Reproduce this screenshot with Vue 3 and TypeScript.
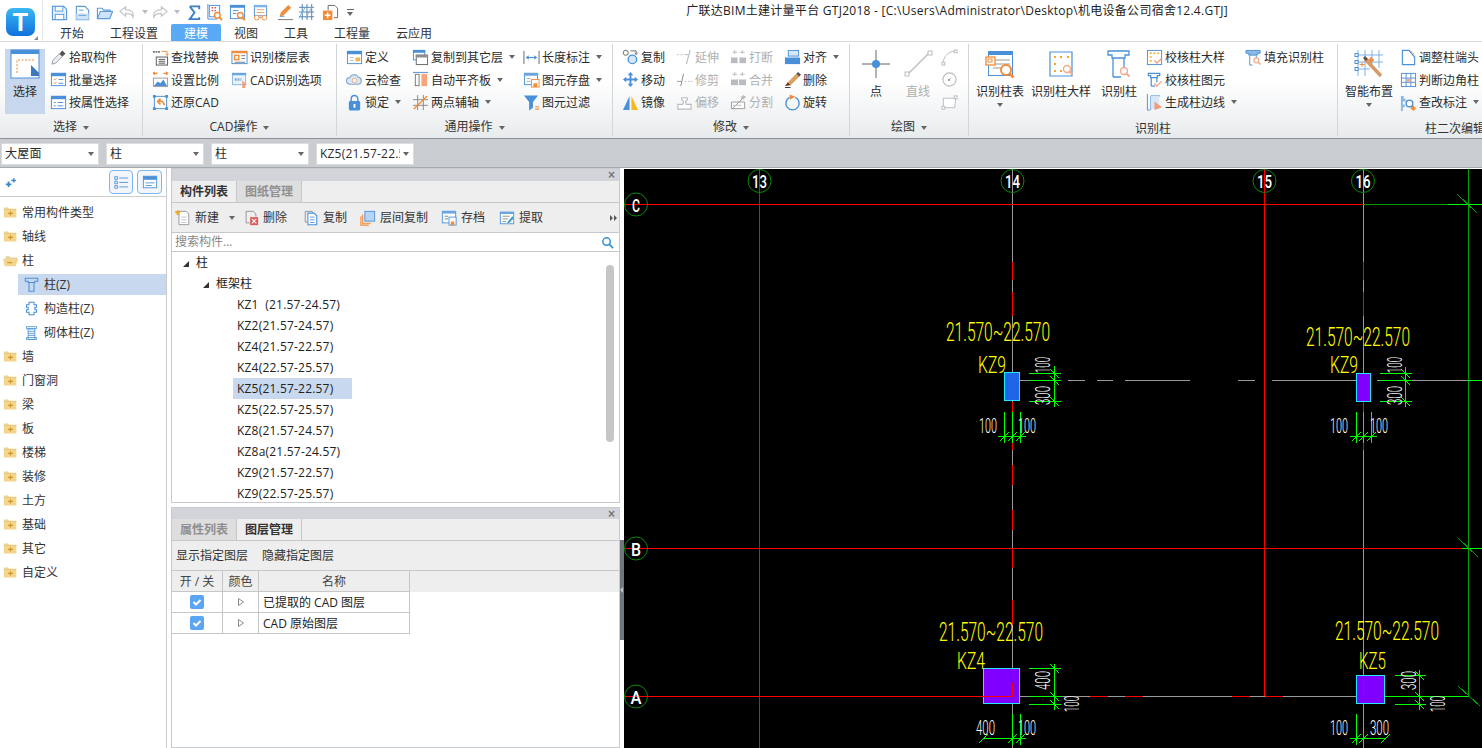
<template>
  <div class="app">
    <!-- title + tabs -->
    <div class="top">
      <div class="logo-box">
        <div class="logo">T</div>
        <span class="grip"></span>
      </div>
      <div class="top-right">
        <div class="quick">
          <span v-for="q in quickIcons" :key="q.i" class="quick-btn" :style="{ width: q.w + 'px' }">
            <svg class="ic" viewBox="0 0 18 18" v-html="icons[q.i]"></svg>
            <i v-if="q.caret" class="caret light"></i>
          </span>
          <span class="quick-more"><i class="caret"></i></span>
          <span class="title">广联达BIM土建计量平台 GTJ2018 - [C:\Users\Administrator\Desktop\机电设备公司宿舍12.4.GTJ]</span>
        </div>
        <div class="tabs">
          <div v-for="t in tabs" :key="t.t" class="tab" :class="{ active: t.t === '建模' }" :style="{ width: t.w + 'px' }">{{ t.t }}</div>
        </div>
      </div>
    </div>

    <!-- ribbon -->
    <div class="ribbon">
      <div v-for="g in groups" :key="g.label" class="group" :style="{ width: g.w + 'px' }">
        <div class="group-body" :style="{ paddingLeft: g.pad + 'px' }">
          <div v-for="(c, ci) in g.cols" :key="ci" class="col" :style="{ width: c.w + 'px', marginLeft: (c.ml || 0) + 'px' }">
            <template v-if="c.big">
              <div class="big" :class="{ sel: c.items[0].sel, off: c.items[0].off }">
                <svg class="big-ic" viewBox="0 0 30 30" v-html="icons[c.items[0].i]"></svg>
                <span class="big-text">{{ c.items[0].t }}</span>
                <i v-if="c.items[0].caret" class="caret big-caret"></i>
              </div>
            </template>
            <template v-else>
              <div v-for="it in c.items" :key="it.i" class="row" :class="{ off: it.off }">
                <svg class="ic" viewBox="0 0 18 18" v-html="icons[it.i]"></svg>
                <span v-if="it.t" class="row-text">{{ it.t }}</span>
                <i v-if="it.caret" class="caret"></i>
              </div>
            </template>
          </div>
        </div>
        <div class="group-label" :class="{ plain: !g.caret }">
          {{ g.label }}<i v-if="g.caret" class="caret label-caret"></i>
        </div>
      </div>
    </div>

    <!-- floor / type selects -->
    <div class="selects">
      <div v-for="s in selects" :key="s.k" class="select">
        <span class="select-text">{{ s.t }}</span><i class="caret"></i>
      </div>
    </div>

    <div class="main">
      <!-- type tree -->
      <div class="side">
        <div class="side-head">
          <svg class="spark" viewBox="0 0 14 12">
            <path d="M4 5h2v2h2v2H6v2H4V9H2V7h2zM10 1h1.500v2H13v1.500h-1.500V6H10V4.500H8V3h2z" fill="#3f86d0" />
          </svg>
          <span class="view-btn">
            <svg viewBox="0 0 18 18" width="16" height="16">
              <path d="M2 3h3v3H2zM2 8h3v3H2zM2 13h3v3H2z" fill="none" stroke="#4a90d9" />
              <path d="M7 4.500h10M7 9.500h10M7 14.500h10" stroke="#4a90d9" />
            </svg>
          </span>
          <span class="view-btn">
            <svg viewBox="0 0 18 18" width="16" height="16">
              <rect x="1.500" y="2.500" width="15" height="13" fill="#fff" stroke="#4a90d9" />
              <rect x="1.500" y="2.500" width="15" height="4" fill="#4a90d9" />
              <path d="M4 10h10M4 13h7" stroke="#4a90d9" />
            </svg>
          </span>
        </div>
        <div class="side-list">
          <div v-for="n in sideList" :key="n.t" class="side-row" :class="{ sub: n.sub, sel: n.sel }">
            <div class="side-inner">
              <svg class="side-ic" viewBox="0 0 18 18" v-html="icons[n.i]"></svg>
              <span>{{ n.t }}</span>
            </div>
          </div>
        </div>
      </div>

      <div class="center">
        <!-- component list -->
        <div class="panel upper">
          <div class="strip"><span class="close">×</span></div>
          <div class="ptabs">
            <div class="ptab on">构件列表</div>
            <div class="ptab">图纸管理</div>
          </div>
          <div class="ptools">
            <div v-for="b in panelTools" :key="b.t" class="ptool" :style="{ width: b.w + 'px' }">
              <svg class="ic16" viewBox="0 0 18 18" v-html="icons[b.i]"></svg>
              <span>{{ b.t }}</span>
              <i v-if="b.caret" class="caret tool-caret"></i>
            </div>
            <svg class="more" viewBox="0 0 8 6" width="8" height="6"><path d="M0 0l3 3-3 3zM4 0l3 3-3 3z" fill="#555" /></svg>
          </div>
          <div class="search">
            <span>搜索构件...</span>
            <svg viewBox="0 0 14 14" width="13" height="13">
              <circle cx="6" cy="6" r="4" fill="none" stroke="#2f8fd0" stroke-width="1.600" />
              <path d="M9 9l4 4" stroke="#2f8fd0" stroke-width="1.800" />
            </svg>
          </div>
          <div class="tree">
            <div class="tree-row lv0"><i class="tri"></i>柱</div>
            <div class="tree-row lv1"><i class="tri"></i>框架柱</div>
            <div v-for="(k, i) in columns" :key="i" class="tree-row lv2" :class="{ sel: i === 4 }">{{ k }}</div>
            <div class="scroll"></div>
          </div>
        </div>

        <!-- layer manager -->
        <div class="panel lower">
          <div class="strip"><span class="close">×</span></div>
          <div class="ptabs">
            <div class="ptab">属性列表</div>
            <div class="ptab on">图层管理</div>
          </div>
          <div class="layer-tools">
            <span>显示指定图层</span>
            <span>隐藏指定图层</span>
          </div>
          <div class="layer-head">
            <div class="c1">开 / 关</div>
            <div class="c2">颜色</div>
            <div class="c3">名称</div>
          </div>
          <div v-for="l in layers" :key="l" class="layer-row">
            <div class="c1">
              <svg viewBox="0 0 14 14" width="14" height="14">
                <rect width="14" height="14" rx="2" fill="#5ba5f5" />
                <path d="M3.500 7l2.500 2.500 4.500-4.500" fill="none" stroke="#fff" stroke-width="2" />
              </svg>
            </div>
            <div class="c2">
              <svg viewBox="0 0 8 10" width="8" height="10">
                <path d="M1.500 1.500l5 3.500-5 3.500z" fill="#fff" stroke="#8a8a8a" />
              </svg>
            </div>
            <div class="c3 name">{{ l }}</div>
          </div>
        </div>
      </div>

      <div class="split">
        <div class="split-bar"><i></i></div>
      </div>

      <!-- CAD drawing -->
      <svg class="canvas" viewBox="624 169 858 579" shape-rendering="crispEdges">
        <line v-for="(s, i) in segments" :key="i" :x1="s[0]" :y1="s[1]" :x2="s[2]" :y2="s[3]" :stroke="s[4]" stroke-width="1" />
        <rect v-for="(r, i) in cols" :key="'c' + i" :x="r.x" :y="r.y" :width="r.w" :height="r.h" :fill="r.f" stroke="#25e8ff" stroke-width="1" />
        <line v-for="(s, i) in overSegments" :key="'o' + i" :x1="s[0]" :y1="s[1]" :x2="s[2]" :y2="s[3]" :stroke="s[4]" stroke-width="1" />
        <g shape-rendering="auto">
          <circle v-for="b in bubbles" :key="b.t" :cx="b.x" :cy="b.y" r="11.500" fill="none" stroke="#0a8a0a" stroke-width="1" />
          <text v-for="b in bubbles" :key="'t' + b.t" class="cad bubble-text" :x="b.x - b.w / 2" :y="b.y + 7" :textLength="b.w" lengthAdjust="spacingAndGlyphs" font-size="19" fill="#fff">{{ b.t }}</text>
          <text v-for="(t, i) in labels" :key="'l' + i" class="cad" :x="t.x" :y="t.y" :font-size="t.s" :fill="t.c" :textLength="t.w" lengthAdjust="spacingAndGlyphs" :transform="t.r ? `rotate(-90 ${t.x} ${t.y})` : undefined">{{ t.t }}</text>
        </g>
      </svg>
    </div>
  </div>
</template>

<script setup lang="ts">
type Item = { t?: string; i: string; caret?: boolean; off?: boolean; sel?: boolean }
type Col = { w: number; ml?: number; big?: boolean; items: Item[] }
type Group = { label: string; w: number; pad: number; caret: boolean; cols: Col[] }
type Seg = [number, number, number, number, string]

const B = '#4a90d9'
const O = '#f28c38'
const G = '#b8bbbf'

const win = `<rect x="1.500" y="2.500" width="15" height="13" fill="#fff" stroke="${B}"/><rect x="1" y="2" width="16" height="3.500" fill="${B}"/>`
const mag = `<circle cx="12" cy="12" r="3" fill="#fff" stroke="${O}" stroke-width="1.500"/><path d="M14 14l3 3" stroke="${O}" stroke-width="2"/>`
const lightMag = `<circle cx="12" cy="12" r="2.600" fill="#fff" stroke="#f3a98a" stroke-width="1.300"/><path d="M14 14l2.500 2.500" stroke="#f3a98a" stroke-width="1.600"/>`
const tee = `<path d="M2.500 2.500h12v2.500h-2.500v2h-7v-2h-2.500zM5.500 7v9M11.500 7v5" fill="none" stroke="${B}" stroke-width="1.300"/><path d="M5.500 16h4" stroke="${B}" stroke-width="1.300"/>`
const folder = (sign: string) => `<path d="M1 3h5l1 1.500h9v10.500h-15z" fill="#f2d58f"/><path d="M1 5h15v1h-15z" fill="#e9c677"/>${sign}`

const icons: Record<string, string> = {
  save: `<path d="M1.500 2.500h12l3 3v11h-15z" fill="#e4f0fb" stroke="#5a9bdc" stroke-width="1.200"/><rect x="4.500" y="2.500" width="8" height="5" fill="#fff" stroke="#5a9bdc"/><rect x="4.500" y="11" width="9" height="5.500" fill="#fff" stroke="#5a9bdc"/>`,
  newdoc: `<path d="M2.500 2.500h9l4 4v10h-13z" fill="#fff" stroke="#5a9bdc" stroke-width="1.200"/><path d="M2.500 10h13v6.500h-13z" fill="#cfe3f7"/><path d="M5 6.500h5M5 12h8" stroke="#5a9bdc"/>`,
  open: `<path d="M1.500 15.500v-11h5l1.500 2h7v2" fill="#fff" stroke="#5a9bdc" stroke-width="1.200"/><path d="M1.500 15.500l3-7.500h13l-3 7.500z" fill="#cfe3f7" stroke="#5a9bdc" stroke-width="1.200"/>`,
  undo: `<path d="M7 3l-6 5 6 5v-3c4 0 7 1 8 4 1-5-2-8-8-8z" fill="#fff" stroke="#c4c7ca" stroke-width="1.300"/>`,
  redo: `<path d="M11 3l6 5-6 5v-3c-4 0-7 1-8 4-1-5 2-8 8-8z" fill="#fff" stroke="#c4c7ca" stroke-width="1.300"/>`,
  sigma: `<path d="M4 2.500h10v3M14 14v2h-10l5-7-5-6.500" fill="none" stroke="#3b7fc4" stroke-width="2"/>`,
  calc: `<rect x="3.500" y="1.500" width="11" height="12" fill="#fff" stroke="${B}"/><path d="M2 0v16h10" fill="none" stroke="${B}"/><path d="M6 4h1.500M9 4h1.500M6 7h1.500M9 7h1.500" stroke="#d0473a" stroke-width="1.500"/>${mag}`,
  docmag: `<rect x="1.500" y="1.500" width="15" height="14" fill="#fff" stroke="${B}"/><rect x="1" y="1" width="16" height="3" fill="${B}"/><path d="M4 7h6M4 10h4" stroke="${B}"/>${mag}`,
  glasses: `<rect x="2.500" y="1.500" width="13" height="11" fill="#fff" stroke="${B}"/><rect x="2" y="1" width="14" height="2.500" fill="#7fb3e6"/><path d="M5 6h8M5 9h8" stroke="#e8a06a"/><circle cx="5" cy="14.500" r="2.500" fill="#fff" stroke="${O}"/><circle cx="13" cy="14.500" r="2.500" fill="#fff" stroke="${O}"/><path d="M7.500 14.500h3" stroke="${O}"/>`,
  penline: `<path d="M3 13l1 -4 8 -8 3 3-8 8z" fill="${O}"/><path d="M1 16.500h16" stroke="#777"/><path d="M3 13h5" stroke="${B}"/>`,
  gridq: `<path d="M1 3.500h16M1 8.500h16M1 13.500h16M4.500 0v17M9.500 0v17M14.500 0v17" stroke="#4f7fb0"/><path d="M1 15L8 3M8 15L15 3" stroke="#7fa9d0"/>`,
  docplus: `<path d="M6.500 1.500h7l3 3v10h-4M6.500 1.500v5" fill="none" stroke="#666"/><rect x="1" y="7" width="10" height="10" fill="${O}"/><path d="M3 12h6M6 9v6" stroke="#fff" stroke-width="1.600"/>`,

  choose: `<rect x="1" y="1" width="28" height="28" fill="#fff" stroke="${B}"/><rect x="1" y="1" width="28" height="4" fill="${B}"/><path d="M7 24V11h17" fill="none" stroke="${O}" stroke-dasharray="2 1.500"/><path d="M21 16l8 8v3h-8z" fill="#3b78bf"/>`,
  dropper: `<path d="M2 16l1-4 7-7 3 3-7 7z" fill="#e9edf1" stroke="#9aa0a6"/><path d="M10 5l3-3.500 3.500 3.500-3.500 3z" fill="#555"/>`,
  batch: `${win}<path d="M4 8.500l1 1 2-2M4 12.500l1 1 2-2" fill="none" stroke="${O}"/><path d="M9 9h5M9 13h5" stroke="${B}"/>`,
  attr: `${win}<path d="M4 9h2M8 9h6M4 12.500h2M8 12.500h6" stroke="${B}"/>`,
  replace: `<path d="M1 3h8" stroke="#777" stroke-width="2" stroke-dasharray="2 .7"/><path d="M10 2.500h6v4M14.500 5l1.500 2 1.500-2" fill="none" stroke="${O}"/><rect x="4.500" y="8.500" width="12" height="8.500" fill="#fff" stroke="#555"/><path d="M7 11h7M7 13h7M7 15h7" stroke="#555"/>`,
  ratio: `<path d="M1 2.500h5M12 2.500h5M1 2.500l2-1.500M1 2.500l2 1.500M17 2.500l-2-1.500M17 2.500l-2 1.500" stroke="${O}" stroke-width="1.200"/><rect x="1.500" y="7.500" width="15" height="9" fill="#fff" stroke="#999"/><path d="M2 16l4-5 3 2 3-4 4 7z" fill="${B}"/>`,
  restore: `<rect x="2.500" y="2.500" width="13" height="13" fill="#fff" stroke="${B}"/><path d="M1 1h3v3h-3zM14 1h3v3h-3zM1 14h3v3h-3zM14 14h3v3h-3z" fill="${B}"/><path d="M13 12c0-4-3-5-6-4M9 5L6 8l3 3" fill="none" stroke="${O}" stroke-width="1.800"/>`,
  floors: `<rect x="1" y="2.500" width="16" height="13" fill="#fff" stroke="${B}"/><rect x="1" y="2" width="16" height="2.500" fill="${O}"/><rect x="3" y="6" width="6" height="6" fill="${O}"/><rect x="4.500" y="7.500" width="3" height="3" fill="#fff"/><path d="M11 7h4M11 10h4M4 14h11" stroke="#777"/>`,
  cadopt: `<rect x="1.500" y="2.500" width="14" height="12" fill="#eaf2fb" stroke="#89b6e3"/><rect x="1" y="2" width="15" height="2.500" fill="#6ba5df"/><path d="M4 9h7" stroke="#7fa9d0" stroke-width="2.500" stroke-dasharray="2 1"/><path d="M12 10l5 5h-2v3h-3z" fill="#f29c74"/>`,

  define: `${win}<path d="M4 9h4M4 12h4" stroke="#bbb"/><rect x="10" y="9" width="5" height="4" fill="#f0b64f"/>`,
  cloud: `<path d="M4 14a3.500 3.500 0 0 1 0-7c1-3.500 7-4.500 9 -.5a3.800 3.800 0 0 1 0 7.500z" fill="#dbe9f7" stroke="#7fa9d0" stroke-width="1.200"/><circle cx="9" cy="10" r="2.500" fill="#fff" stroke="#f0a37a"/>`,
  lock: `<rect x="3" y="7.500" width="12" height="10" rx="1.500" fill="${B}"/><path d="M5.500 8V5a3.500 3.500 0 0 1 7 0v3" fill="none" stroke="${B}" stroke-width="1.500"/><rect x="8" y="10.500" width="2" height="4" fill="#fff"/>`,
  copyfloor: `<rect x="1.500" y="1.500" width="12" height="10" fill="#fff" stroke="${B}"/><rect x="1" y="1" width="13" height="3" fill="${B}"/><rect x="4.500" y="6.500" width="12" height="10" fill="#fff" stroke="#666"/><rect x="4" y="6" width="13" height="3" fill="#8b8f94"/>`,
  flush: `<path d="M1 1.500h16" stroke="${B}"/><rect x="3.500" y="3.500" width="4" height="12" fill="#fff" stroke="#777"/><rect x="10" y="3" width="6" height="13" fill="#f7a57a"/>`,
  twoaxis: `<path d="M1 6h16M1 12h16M6 1v16M12 1v16" stroke="#888"/><path d="M2 16L16 2" stroke="${O}" stroke-width="1.500"/>`,
  length: `<path d="M1 2v14M17 2v14" stroke="#666"/><path d="M3.500 9h11" stroke="${B}" stroke-width="1.200"/><path d="M3 9l3-2.500v5zM15 9l-3-2.500v5z" fill="${B}"/>`,
  store: `<rect x="1.500" y="2.500" width="14" height="12" fill="#fff" stroke="${B}"/><rect x="1" y="2" width="15" height="3" fill="#6ba5df"/><path d="M4 8h4M4 11h4" stroke="#aaa"/><rect x="9" y="9" width="8" height="8" fill="#fff" stroke="${O}"/><rect x="11" y="13" width="4" height="4" fill="${O}"/>`,
  filter: `<path d="M1 1.500h15l-5.500 7v6l-4 3v-9z" fill="${B}"/><path d="M13 13.500h4M13 16h4" stroke="${O}" stroke-width="1.200"/>`,

  copy: `<circle cx="4" cy="4" r="2.700" fill="#fff" stroke="#666"/><circle cx="11" cy="11" r="4.500" fill="#d7e7f7" stroke="${B}" stroke-width="1.400"/><path d="M9 2h6v3M13.500 4l1.500 2 1.500-2" fill="none" stroke="#666"/>`,
  move: `<path d="M9 1l3 3.500h-2V8h3.500V6L17 9l-3.500 3v-2H10v3.500h2L9 17l-3-3.500h2V10H4.500v2L1 9l3.500-3v2H8V4.500H6z" fill="${B}"/>`,
  mirror: `<path d="M8 2v15H1z" fill="${B}"/><path d="M10 2v15h7z" fill="#f5b820"/>`,
  extend: `<path d="M1 6h2M5 6h2M9 6h4" stroke="${G}"/><path d="M15 1L11 16" stroke="${G}" stroke-width="1.200"/>`,
  trim: `<path d="M1 11h5" stroke="#999"/><path d="M9 11h2M13 11h2M16 11h1.500" stroke="${G}"/><path d="M8 3L5 16" stroke="#888"/>`,
  offset: `<path d="M6 4h6v2l-2 2 1 3h5v5H2v-5h5l1-3-2-2z" fill="#fff" stroke="${G}" stroke-width="1.200"/>`,
  brk: `<path d="M5 1v4M2.500 3.500h5M13 1v4M10.500 3.500h5" stroke="${G}"/><rect x="1" y="9" width="7" height="6" fill="${G}"/><rect x="10" y="9" width="7" height="6" fill="${G}"/>`,
  merge: `<path d="M5 1v4M2.500 3.500h5M13 1v4M10.500 3.500h5" stroke="${G}"/><rect x="1" y="9" width="16" height="6" fill="${G}"/><path d="M9 9v6" stroke="#fff"/>`,
  divide: `<path d="M1.500 8.500h14v7h-14z" fill="#fff" stroke="#999"/><path d="M2 16L15 3" stroke="#999"/><path d="M11 4l3-3 3 2-3 3z" fill="${G}"/><path d="M3 12h9" stroke="${G}"/>`,
  align: `<rect x="4.500" y="1.500" width="11" height="6" fill="#d7e7f7" stroke="${B}"/><rect x="1" y="9" width="16" height="7" fill="${B}"/>`,
  erase: `<path d="M4 12l9-9 3 3-9 9z" fill="#d9a25e"/><path d="M13 3l2-2 3 3-2 2z" fill="#555"/><path d="M1 16l3-4 3 3z" fill="#6b3a1e"/><path d="M1 17.500h6" stroke="#333"/>`,
  rotate: `<path d="M6 3.500a7 7 0 1 0 6 0" fill="none" stroke="${B}" stroke-width="1.500"/><path d="M6 .5l6 2.500-6 3z" fill="${O}"/>`,

  point: `<path d="M15 1v28M1 15h28" stroke="#666" stroke-width="1"/><circle cx="15" cy="15" r="4" fill="${B}"/>`,
  linebig: `<path d="M5 25L26 4" stroke="${G}" stroke-width="1.200"/><rect x="2" y="23" width="4" height="4" fill="#fff" stroke="${G}"/><rect x="25" y="2" width="4" height="4" fill="#fff" stroke="${G}"/>`,
  arc: `<path d="M2 15C3 7 8 3 15 2" fill="none" stroke="${G}"/><rect x="1" y="14" width="3" height="3" fill="#fff" stroke="${G}"/><rect x="14" y="1" width="3" height="3" fill="#fff" stroke="${G}"/>`,
  circle: `<circle cx="9" cy="9" r="7" fill="#fff" stroke="${G}" stroke-width="1.200"/><path d="M8 10l3-3" stroke="${G}"/><circle cx="8.500" cy="9.500" r="1.200" fill="#999"/>`,
  rectg: `<path d="M2.500 4.500h13l-1 10h-12z" fill="#fff" stroke="${G}"/><rect x="1" y="13" width="3" height="3" fill="#fff" stroke="${G}"/><rect x="14" y="2" width="3" height="3" fill="#fff" stroke="${G}"/>`,

  coltable: `<rect x="3.500" y="2.500" width="24" height="24" fill="#fff" stroke="${B}"/><rect x="3" y="2" width="25" height="4" fill="${B}"/><path d="M8 11h17M8 15h17M8 19h10" stroke="#999"/><rect x="1" y="8" width="9" height="8" fill="#fff" stroke="${O}" stroke-width="1.300"/><rect x="3" y="10" width="4" height="3" fill="none" stroke="${O}"/><circle cx="21" cy="21" r="5" fill="#fff" stroke="${O}" stroke-width="2"/><path d="M24.500 24.500l4 4" stroke="${O}" stroke-width="2.500"/>`,
  coldetail: `<path d="M4 3h22v24h-22z" fill="#fff" stroke="${B}" stroke-width="1.200"/><path d="M8 8h2M14 8h2M21 8h2M8 15h2M8 22h2M14 22h2" stroke="#f5a623" stroke-width="2"/><circle cx="21" cy="20" r="3.500" fill="#fff" stroke="#f3a98a" stroke-width="1.400"/><path d="M23.500 22.500l3 3" stroke="#f3a98a" stroke-width="1.800"/>`,
  colrec: `<path d="M4 2h21v4h-4v3h-13v-3h-4zM9 9v19M20 9v10M9 28h8" fill="#fff" stroke="${B}" stroke-width="1.300"/><circle cx="20" cy="22" r="3.500" fill="#fff" stroke="#f3a98a" stroke-width="1.400"/><path d="M22.500 24.500l3 3" stroke="#f3a98a" stroke-width="1.800"/>`,
  chkdetail: `<rect x="1.500" y="1.500" width="15" height="15" fill="#fff" stroke="${B}"/><path d="M4 4.500h2M8 4.500h2M12 4.500h2M4 8.500h2M4 12.500h2" stroke="#f5a623" stroke-width="1.600"/><path d="M9 12l2.500 3 5-5" fill="none" stroke="#f39a76" stroke-width="1.300"/>`,
  chkcol: `${tee}<path d="M9 13l2.500 3 5-5" fill="none" stroke="#f39a76" stroke-width="1.300"/>`,
  genedge: `<path d="M1.500 0v17M4 17H1.500M15 2h-10v15" fill="#fff" stroke="${B}"/><rect x="5" y="2" width="9" height="14" fill="#d7e7f7"/><path d="M9 8l8 6-8 3z" fill="#f39a76"/>`,
  fillcol: `<path d="M1 1.500h15v3h-3v2h-9v-2h-3z" fill="#8db8e2" stroke="${B}"/><path d="M5 7v10M12 7v3M5 17h3" stroke="${B}"/>${lightMag}`,
  smart: `<path d="M4 1v26M11 1v26M18 1v18M25 1v18M1 6h28M1 13h28M1 20h15" stroke="#7fb3e6"/><rect x="1" y="4.500" width="3" height="3" fill="#fff" stroke="${B}"/><rect x="1" y="11.500" width="3" height="3" fill="#fff" stroke="${B}"/><rect x="1" y="18.500" width="3" height="3" fill="#fff" stroke="${B}"/><path d="M11 10l16 17" stroke="#d99a6a" stroke-width="3.500"/><path d="M10 8l3 3" stroke="#555" stroke-width="3"/><path d="M17 8l1 2 2 1-2 1-1 2-1-2-2-1 2-1zM8 13v5M5.500 15.500h5" stroke="${O}" fill="${O}"/>`,
  colhead: `<path d="M2.500 1.500v15h13v-8l-6-7z" fill="#fff" stroke="${B}" stroke-width="1.200"/><path d="M11 2l5 4" stroke="${O}" stroke-dasharray="2 1"/>`,
  corner: `<rect x="1.500" y="2.500" width="15" height="14" fill="#fff" stroke="${B}"/><path d="M6.500 2.500v14M11.500 2.500v14M1.500 7.500h15M1.500 12h15" stroke="${B}"/><path d="M7 8h4v4h-4z" fill="#f3a98a"/>`,
  markfix: `<path d="M1 2h3v3h2v3h-3v3h2v3h-2v4h-2z" fill="#8db8e2"/><circle cx="10" cy="10" r="3.500" fill="#fff" stroke="${B}" stroke-width="1.500"/><path d="M12.500 12.500l2 2" stroke="${B}" stroke-width="1.800"/><path d="M14 12l3 3-3 3-3-3z" fill="${O}"/>`,

  fplus: folder(`<path d="M6 10h6M9 7.500v5" stroke="#d9962e" stroke-width="1.500"/>`),
  fminus: `<path d="M3 4h5l1 1.500h8v2h-14z" fill="#e8d2a0"/><path d="M0 7h15l3-0v1l-3 8h-13z" fill="#f2d58f"/><path d="M5 11.500h6" stroke="#d9962e" stroke-width="1.500"/>`,
  coltee: `<path d="M1.500 1.500h15v3.500h-3.500v1.500h-8v-1.500h-3.500zM6 7v10h6v-10" fill="none" stroke="${B}" stroke-width="1.300"/>`,
  colstruct: `<path d="M6 1.500h6v3h3v3h-2v3h2v3h-3v3h-6v-3h-3v-3h2v-3h-2v-3h3z" fill="#fff" stroke="${B}" stroke-width="1.300"/><path d="M11 3h3" stroke="#bcd6f0"/>`,
  colbrick: `<path d="M3 2h12v2.500h-12zM5 4.500h8v13h-8zM3 15h12v2.500h-12z" fill="#fff" stroke="${B}"/><path d="M5 7.500h8M5 10h8M5 12.500h8" stroke="${B}"/>`,

  pnew: `<path d="M4.500 1.500h8l3 3v12h-11z" fill="#fff" stroke="#8a8f95"/><path d="M7 8h6M7 11h6M7 14h6" stroke="#b9bcc0"/><path d="M0 2.500h6M3 0v6" stroke="#f5a623" stroke-width="1.600"/><path d="M1 1l4 4M5 1l-4 4" stroke="#f5a623"/>`,
  pdel: `<path d="M3.500 1.500h8l3 3v3M3.500 1.500v13h4" fill="none" stroke="#8a8f95"/><rect x="8" y="8" width="9" height="9" fill="#e05a58"/><path d="M10 10l5 5M15 10l-5 5" stroke="#fff" stroke-width="1.300"/>`,
  pcopy: `<path d="M2.500 1.500h8v2M2.500 1.500v12h2" fill="none" stroke="#8a8f95"/><path d="M5.500 3.500h7l3 3v10h-10z" fill="#fff" stroke="${B}" stroke-width="1.200"/><path d="M8 8h5M8 11h5M8 14h5" stroke="${B}"/>`,
  pfloor: `<path d="M1 7v10h9M3 5v10h9" fill="none" stroke="${O}" stroke-width="1.200"/><rect x="5.500" y="1.500" width="11" height="11" fill="#b6d4f5" stroke="${B}"/>`,
  parch: `<rect x="1.500" y="1.500" width="15" height="13" fill="#fff" stroke="${B}"/><rect x="1" y="1" width="16" height="3" fill="#6ba5df"/><path d="M4 7h4M4 10h4" stroke="#777"/><rect x="9" y="8" width="8" height="9" fill="#fff" stroke="${B}"/><rect x="11" y="13" width="4" height="4" fill="${O}"/>`,
  pext: `<rect x="1.500" y="2.500" width="15" height="13" fill="#fff" stroke="${B}"/><rect x="1" y="2" width="16" height="2.500" fill="#6ba5df"/><path d="M4 7h8M4 10h6M4 13h4" stroke="#888"/><path d="M9 14l6-7 2 2-6 6z" fill="#3fa0c8"/>`,
}

const quickIcons = [
  { i: 'save', w: 23 }, { i: 'newdoc', w: 22 }, { i: 'open', w: 23 },
  { i: 'undo', w: 32, caret: true }, { i: 'redo', w: 35, caret: true },
  { i: 'sigma', w: 20 }, { i: 'calc', w: 23 }, { i: 'docmag', w: 23 }, { i: 'glasses', w: 25 },
  { i: 'penline', w: 21 }, { i: 'gridq', w: 24 }, { i: 'docplus', w: 25 },
]

const tabs = [
  { t: '开始', w: 50 }, { t: '工程设置', w: 74 }, { t: '建模', w: 50 }, { t: '视图', w: 50 },
  { t: '工具', w: 50 }, { t: '工程量', w: 62 }, { t: '云应用', w: 62 },
]

const groups: Group[] = [
  {
    label: '选择', w: 143, pad: 5, caret: true,
    cols: [
      { w: 40, big: true, items: [{ t: '选择', i: 'choose', sel: true }] },
      { w: 92, ml: 5, items: [{ t: '拾取构件', i: 'dropper' }, { t: '批量选择', i: 'batch' }, { t: '按属性选择', i: 'attr' }] },
    ],
  },
  {
    label: 'CAD操作', w: 194, pad: 9, caret: true,
    cols: [
      { w: 79, items: [{ t: '查找替换', i: 'replace' }, { t: '设置比例', i: 'ratio' }, { t: '还原CAD', i: 'restore' }] },
      { w: 100, items: [{ t: '识别楼层表', i: 'floors' }, { t: 'CAD识别选项', i: 'cadopt' }] },
    ],
  },
  {
    label: '通用操作', w: 276, pad: 9, caret: true,
    cols: [
      { w: 66, items: [{ t: '定义', i: 'define' }, { t: '云检查', i: 'cloud' }, { t: '锁定', i: 'lock', caret: true }] },
      { w: 111, items: [{ t: '复制到其它层', i: 'copyfloor', caret: true }, { t: '自动平齐板', i: 'flush', caret: true }, { t: '两点辅轴', i: 'twoaxis', caret: true }] },
      { w: 88, items: [{ t: '长度标注', i: 'length', caret: true }, { t: '图元存盘', i: 'store', caret: true }, { t: '图元过滤', i: 'filter' }] },
    ],
  },
  {
    label: '修改', w: 237, pad: 9, caret: true,
    cols: [
      { w: 54, items: [{ t: '复制', i: 'copy' }, { t: '移动', i: 'move' }, { t: '镜像', i: 'mirror' }] },
      { w: 54, items: [{ t: '延伸', i: 'extend', off: true }, { t: '修剪', i: 'trim', off: true }, { t: '偏移', i: 'offset', off: true }] },
      { w: 54, items: [{ t: '打断', i: 'brk', off: true }, { t: '合并', i: 'merge', off: true }, { t: '分割', i: 'divide', off: true }] },
      { w: 60, items: [{ t: '对齐', i: 'align', caret: true }, { t: '删除', i: 'erase' }, { t: '旋转', i: 'rotate' }] },
    ],
  },
  {
    label: '绘图', w: 119, pad: 5, caret: true,
    cols: [
      { w: 42, big: true, items: [{ t: '点', i: 'point' }] },
      { w: 42, big: true, items: [{ t: '直线', i: 'linebig', off: true }] },
      { w: 18, ml: 2, items: [{ i: 'arc', off: true }, { i: 'circle', off: true }, { i: 'rectg', off: true }] },
    ],
  },
  {
    label: '识别柱', w: 369, pad: 5, caret: false,
    cols: [
      { w: 52, big: true, items: [{ t: '识别柱表', i: 'coltable', caret: true }] },
      { w: 70, big: true, items: [{ t: '识别柱大样', i: 'coldetail' }] },
      { w: 46, big: true, items: [{ t: '识别柱', i: 'colrec' }] },
      { w: 99, ml: 4, items: [{ t: '校核柱大样', i: 'chkdetail' }, { t: '校核柱图元', i: 'chkcol' }, { t: '生成柱边线', i: 'genedge', caret: true }] },
      { w: 88, items: [{ t: '填充识别柱', i: 'fillcol' }] },
    ],
  },
  {
    label: '柱二次编辑', w: 234, pad: 6, caret: false,
    cols: [
      { w: 50, big: true, items: [{ t: '智能布置', i: 'smart', caret: true }] },
      { w: 100, ml: 6, items: [{ t: '调整柱端头', i: 'colhead' }, { t: '判断边角柱', i: 'corner' }, { t: '查改标注', i: 'markfix', caret: true }] },
    ],
  },
]

const selects = [
  { k: 'floor', t: '大屋面' }, { k: 'major', t: '柱' }, { k: 'type', t: '柱' }, { k: 'name', t: 'KZ5(21.57-22.57)' },
]

const sideList = [
  { t: '常用构件类型', i: 'fplus' }, { t: '轴线', i: 'fplus' }, { t: '柱', i: 'fminus' },
  { t: '柱(Z)', i: 'coltee', sub: true, sel: true }, { t: '构造柱(Z)', i: 'colstruct', sub: true }, { t: '砌体柱(Z)', i: 'colbrick', sub: true },
  { t: '墙', i: 'fplus' }, { t: '门窗洞', i: 'fplus' }, { t: '梁', i: 'fplus' }, { t: '板', i: 'fplus' },
  { t: '楼梯', i: 'fplus' }, { t: '装修', i: 'fplus' }, { t: '土方', i: 'fplus' }, { t: '基础', i: 'fplus' },
  { t: '其它', i: 'fplus' }, { t: '自定义', i: 'fplus' },
]

const panelTools = [
  { t: '新建', i: 'pnew', w: 68, caret: true }, { t: '删除', i: 'pdel', w: 60 }, { t: '复制', i: 'pcopy', w: 57 },
  { t: '层间复制', i: 'pfloor', w: 81 }, { t: '存档', i: 'parch', w: 58 }, { t: '提取', i: 'pext', w: 58 },
]

const columns = [
  'KZ1  (21.57-24.57)', 'KZ2(21.57-24.57)', 'KZ4(21.57-22.57)', 'KZ4(22.57-25.57)', 'KZ5(21.57-22.57)',
  'KZ5(22.57-25.57)', 'KZ8(21.57-24.57)', 'KZ8a(21.57-24.57)', 'KZ9(21.57-22.57)', 'KZ9(22.57-25.57)',
]

const layers = ['已提取的 CAD 图层', 'CAD 原始图层']

// drawing data, page coordinates
const RED = '#ff0000'
const GRAY = '#9a9a9a'
const GREEN = '#00ff00'
const DARK = '#00a000'

const segments: Seg[] = [
  [759.5, 169, 759.5, 748, RED],
  [1012.5, 169, 1012.5, 748, GRAY],
  [1264.5, 169, 1264.5, 697, RED],
  [1363.5, 169, 1363.5, 748, GRAY],
  [1468.5, 169, 1468.5, 697, DARK],
  [625, 204.5, 1363, 204.5, RED],
  [1363, 204.5, 1448, 204.5, DARK],
  [1448, 204.5, 1482, 204.5, GREEN],
  [625, 548.5, 1462, 548.5, RED],
  [1462, 548.5, 1482, 548.5, GREEN],
  [625, 696.5, 1012, 696.5, RED],
  [1012, 696.5, 1363, 696.5, GRAY],
  [1363, 696.5, 1468, 696.5, GREEN],
  [1090, 696.5, 1108, 696.5, RED],
  [1125, 696.5, 1143, 696.5, RED],
  [1232, 696.5, 1250, 696.5, RED],
  [1265, 696.5, 1283, 696.5, RED],
  [1020, 380.5, 1057, 380.5, GRAY],
  [1068, 380.5, 1085, 380.5, GRAY],
  [1097, 380.5, 1113, 380.5, GRAY],
  [1125, 380.5, 1190, 380.5, GRAY],
  [1238, 380.5, 1255, 380.5, GRAY],
  [1272, 380.5, 1357, 380.5, GRAY],
  [1377, 380.5, 1468, 380.5, GRAY],
  [1468, 380.5, 1482, 380.5, GREEN],
]
for (const x of [1012.5, 1363.5]) {
  for (const [a, b] of [[262, 280], [292, 316], [402, 450]]) segments.push([x, a, x, b, RED])
}
for (const [a, b] of [[465, 485], [510, 530], [548, 568], [600, 625]]) segments.push([1012.5, a, 1012.5, b, RED])

const cols = [
  { x: 1004.5, y: 372.5, w: 15, h: 28, f: '#1e66e8' },
  { x: 1356.5, y: 373.5, w: 14, h: 28, f: '#7f00ff' },
  { x: 983.5, y: 668.5, w: 36, h: 35, f: '#7f00ff' },
  { x: 1356.5, y: 675.5, w: 28, h: 28, f: '#7f00ff' },
]

const overSegments: Seg[] = [
  [1012.5, 683, 1012.5, 697, RED],
  [983, 696.5, 1012, 696.5, RED],
  [1363.5, 680, 1363.5, 697, RED],
]

function tick(x: number, y: number, dir: 1 | -1) {
  overSegments.push([x - 4.5, y - 4.5 * dir, x + 4.5, y + 4.5 * dir, GREEN])
}
// vertical dimension chain with its extension lines
function vDim(x: number, top: number, bottom: number, ys: number[], from: number) {
  overSegments.push([x, top, x, bottom, GREEN])
  for (const y of ys) {
    overSegments.push([from, y, x + 6, y, GREEN])
    tick(x, y, 1)
  }
}
// horizontal dimension chain with its extension lines
function hDim(y: number, left: number, right: number, xs: number[], from: number) {
  overSegments.push([left, y, right, y, GREEN])
  for (const x of xs) {
    overSegments.push([x, from, x, y + 6, GREEN])
    tick(x, y, -1)
  }
}
vDim(1054.5, 366, 407, [373.5, 380.5, 401.5], 1029)
hDim(436.5, 998, 1026, [1004.5, 1012.5, 1020.5], 412)
vDim(1405.5, 367, 407, [373.5, 380.5, 401.5], 1380)
hDim(436.5, 1350, 1377, [1356.5, 1363.5, 1371.5], 412)
vDim(1054.5, 664, 710, [668.5, 696.5, 704.5], 1029)
hDim(738.5, 983, 1026, [1012.5, 1020.5], 714)
vDim(1419.5, 670, 710, [675.5, 696.5, 704.5], 1395)
hDim(738.5, 1350, 1385, [1356.5, 1363.5], 714)
tick(983.5, 738.5, -1)
tick(1385.5, 738.5, -1)
overSegments.push([1457, 194, 1477, 213, DARK], [1458, 538, 1478, 557, DARK], [1458, 686, 1480, 706, DARK])

const bubbles = [
  { t: '13', x: 759.5, y: 181, w: 15 }, { t: '14', x: 1012.5, y: 181, w: 15 },
  { t: '15', x: 1264.5, y: 181, w: 15 }, { t: '16', x: 1363, y: 181, w: 15 },
  { t: 'C', x: 636, y: 204.5, w: 8 }, { t: 'B', x: 636, y: 548.5, w: 10 }, { t: 'A', x: 636, y: 696.5, w: 11 },
]

const Y = '#ffff00'
const W = '#ffffff'
const labels = [
  { t: '21.570~22.570', x: 946, y: 341, s: 25, c: Y, w: 104 },
  { t: 'KZ9', x: 978, y: 373, s: 23, c: Y, w: 28 },
  { t: '100', x: 979, y: 433, s: 20, c: W, w: 18 },
  { t: '100', x: 1018, y: 433, s: 20, c: W, w: 18 },
  { t: '100', x: 1050, y: 373, s: 20, c: W, w: 16, r: true },
  { t: '300', x: 1050, y: 405, s: 20, c: W, w: 19, r: true },

  { t: '21.570~22.570', x: 1306, y: 346, s: 25, c: Y, w: 104 },
  { t: 'KZ9', x: 1330, y: 373, s: 23, c: Y, w: 28 },
  { t: '100', x: 1330, y: 433, s: 20, c: W, w: 18 },
  { t: '100', x: 1370, y: 433, s: 20, c: W, w: 18 },
  { t: '100', x: 1402, y: 373, s: 20, c: W, w: 16, r: true },
  { t: '300', x: 1402, y: 405, s: 20, c: W, w: 19, r: true },

  { t: '21.570~22.570', x: 939, y: 641, s: 25, c: Y, w: 104 },
  { t: 'KZ4', x: 957, y: 669, s: 23, c: Y, w: 28 },
  { t: '400', x: 976, y: 735, s: 20, c: W, w: 19 },
  { t: '100', x: 1018, y: 735, s: 20, c: W, w: 18 },
  { t: '400', x: 1050, y: 690, s: 20, c: W, w: 19, r: true },
  { t: '100', x: 1079, y: 712, s: 20, c: W, w: 16, r: true },

  { t: '21.570~22.570', x: 1335, y: 640, s: 25, c: Y, w: 104 },
  { t: 'KZ5', x: 1359, y: 669, s: 23, c: Y, w: 27 },
  { t: '100', x: 1330, y: 735, s: 20, c: W, w: 18 },
  { t: '300', x: 1370, y: 735, s: 20, c: W, w: 19 },
  { t: '300', x: 1416, y: 690, s: 20, c: W, w: 19, r: true },
  { t: '100', x: 1445, y: 712, s: 20, c: W, w: 16, r: true },
]
</script>

<style scoped>
.app {
  width: 1482px;
  height: 748px;
  overflow: hidden;
  display: flex;
  flex-direction: column;
  background: #fff;
  color: #2b2b2b;
  font-family: "Open Sans", "Noto Sans CJK SC", sans-serif;
  font-size: 12px;
  line-height: 1;
}

.ic {
  width: 17px;
  height: 17px;
  flex: none;
}

.top {
  height: 42px;
  display: flex;
  flex: none;
  border-bottom: 1px solid #dcdcdc;
  box-sizing: border-box;
}
.logo-box {
  width: 43px;
  flex: none;
  position: relative;
  border-right: 1px solid #e6e6e6;
  box-sizing: border-box;
}
.logo {
  width: 29px;
  height: 28px;
  margin: 8px 0 0 6px;
  border-radius: 7px;
  background: linear-gradient(#39b8f2, #1170e0);
  color: #fff;
  font: bold 25px/28px "Liberation Sans", sans-serif;
  text-align: center;
}
.grip {
  position: absolute;
  left: 34px;
  top: 36px;
  border-left: 4px solid transparent;
  border-bottom: 4px solid #888;
}
.top-right {
  flex: 1;
  padding-left: 4px;
}
.quick {
  height: 24px;
  display: flex;
  align-items: center;
  padding-left: 4px;
}
.quick-btn {
  display: flex;
  align-items: center;
  flex: none;
}
.quick-more {
  display: flex;
  flex-direction: column;
  width: 7px;
  border-top: 1px solid #666;
  padding-top: 2px;
}
.quick-more .caret {
  margin: 0;
}
.title {
  margin-left: auto;
  padding-right: 254px;
  margin-top: -2px;
  white-space: nowrap;
  letter-spacing: 0.27px;
  color: #222;
}
.tabs {
  display: flex;
  height: 17px;
}
.tab {
  text-align: center;
  line-height: 19px;
  color: #333;
}
.tab.active {
  background: #5aa9f6;
  color: #fff;
  border-radius: 2px 2px 0 0;
}

.caret {
  display: inline-block;
  flex: none;
  width: 0;
  height: 0;
  margin-left: 6px;
  border: 3.5px solid transparent;
  border-top: 4px solid #666;
  border-bottom: 0;
}
.caret.light {
  border-top-color: #bbb;
}

.ribbon {
  height: 97px;
  flex: none;
  display: flex;
  padding-top: 2px;
  box-sizing: border-box;
  background: linear-gradient(#fff 0%, #fff 40%, #e8ebed 100%);
  overflow: hidden;
  border-bottom: 1px solid #8e9196;
}
.group {
  flex: none;
  height: 92px;
  padding-top: 2px;
  border-right: 1px solid #d3d6d9;
  box-sizing: border-box;
}
.group:last-child {
  border-right: 0;
}
.group-body {
  height: 71px;
  display: flex;
}
.col {
  flex: none;
}
.row {
  height: 22.5px;
  display: flex;
  align-items: center;
  white-space: nowrap;
}
.row-text {
  margin-left: 2px;
  padding-top: 2px;
}
.off .row-text,
.off .big-text {
  color: #aeb0b2;
}
.big {
  display: flex;
  flex-direction: column;
  align-items: center;
  height: 65px;
  margin-top: 3px;
  white-space: nowrap;
}
.big.sel {
  background: #c6d7ee;
}
.big-ic {
  width: 30px;
  height: 30px;
  flex: none;
}
.big-text {
  height: 24px;
  line-height: 26px;
}
.big-caret {
  margin: 0;
}
.group-label {
  height: 19px;
  line-height: 19px;
  text-align: center;
  color: #333;
  white-space: nowrap;
}
.group-label.plain {
  line-height: 23px;
}
.label-caret {
  margin-left: 6px;
  vertical-align: middle;
}

.selects {
  height: 29px;
  flex: none;
  display: flex;
  gap: 7px;
  padding: 4px 0 0 1px;
  box-sizing: border-box;
  background: #c9ccd0;
  border-bottom: 1px solid #a6a9ad;
}
.select {
  width: 98px;
  height: 22px;
  display: flex;
  align-items: center;
  padding: 0 4px 0 3px;
  box-sizing: border-box;
  background: #fff;
  border: 1px solid #dcdcdc;
}
.select-text {
  flex: 1;
  min-width: 0;
  line-height: 18px;
  overflow: hidden;
  white-space: nowrap;
  letter-spacing: 0.2px;
}
.select .caret {
  margin-left: 3px;
}

.main {
  flex: 1;
  min-height: 0;
  display: flex;
}
.side {
  width: 167px;
  flex: none;
  border-right: 1px solid #c8cacd;
  box-sizing: border-box;
}
.side-head {
  height: 29px;
  display: flex;
  align-items: center;
  padding-left: 4px;
  box-sizing: border-box;
  border-bottom: 1px solid #ccc;
}
.spark {
  width: 13px;
  height: 11px;
  margin-right: 92px;
}
.view-btn {
  width: 25px;
  height: 24px;
  margin-right: 4px;
  display: flex;
  align-items: center;
  justify-content: center;
  box-sizing: border-box;
  border: 1px solid #7db6f0;
  border-radius: 4px;
  background: #f2f6fb;
}
.side-list {
  padding-top: 3px;
}
.side-row {
  height: 24px;
  padding: 1.5px 0;
  box-sizing: border-box;
}
.side-inner {
  height: 21px;
  display: flex;
  align-items: center;
  gap: 4px;
  padding: 2px 0 0 3px;
  box-sizing: border-box;
  color: #333;
}
.side-ic {
  width: 15px;
  height: 15px;
  flex: none;
  margin-top: -2px;
}
.side-row.sub .side-inner {
  margin-left: 18px;
  padding-left: 6px;
  gap: 5px;
}
.side-row.sel .side-inner {
  background: #c8d9ef;
}

.center {
  width: 449px;
  flex: none;
  margin-left: 4px;
  display: flex;
  flex-direction: column;
  gap: 4px;
}
.panel {
  border: 1px solid #c8cad0;
  box-sizing: border-box;
  display: flex;
  flex-direction: column;
}
.upper {
  height: 335px;
  flex: none;
}
.lower {
  flex: 1;
  min-height: 0;
}
.strip {
  height: 12px;
  flex: none;
  background: #d2d4d9;
  text-align: right;
  padding-right: 4px;
  box-sizing: border-box;
}
.lower .strip {
  height: 11px;
}
.close {
  font: bold 12px/12px "Liberation Sans", sans-serif;
  color: #777;
}
.ptabs {
  height: 22px;
  flex: none;
  display: flex;
  background: #eee;
  border-bottom: 1px solid #c5c7cb;
  box-sizing: border-box;
}
.ptab {
  width: 65px;
  text-align: center;
  line-height: 21px;
  color: #8f8f8f;
  font-weight: 700;
  background: #dedede;
  border-right: 1px solid #c5c7cb;
  box-sizing: border-box;
}
.ptab.on {
  color: #333;
  background: #eee;
}
.ptools {
  height: 30px;
  flex: none;
  display: flex;
  align-items: center;
  padding-left: 3px;
  background: #eee;
  border-bottom: 1px solid #c5c7cb;
  box-sizing: border-box;
}
.ptool {
  display: flex;
  align-items: center;
  flex: none;
  gap: 4px;
  white-space: nowrap;
  color: #333;
}
.ic16 {
  width: 16px;
  height: 16px;
  flex: none;
}
.tool-caret {
  margin-left: 6px;
}
.more {
  margin-left: auto;
  margin-right: 1px;
}
.search {
  height: 19px;
  flex: none;
  display: flex;
  align-items: center;
  justify-content: space-between;
  padding: 0 5px 0 3px;
  color: #888;
  border-bottom: 1px solid #c5c7cb;
  box-sizing: border-box;
}
.tree {
  flex: 1;
  min-height: 0;
  overflow: hidden;
  position: relative;
}
.tree-row {
  height: 21px;
  line-height: 21px;
  white-space: pre;
  color: #222;
}
.lv0 {
  padding-left: 11px;
}
.lv1 {
  padding-left: 31px;
}
.tri {
  display: inline-block;
  width: 0;
  height: 0;
  margin-right: 7px;
  border-left: 6px solid transparent;
  border-bottom: 6px solid #333;
}
.lv2 {
  width: 119px;
  margin-left: 61px;
  padding-left: 4px;
  box-sizing: border-box;
  letter-spacing: 0.2px;
}
.lv2.sel {
  background: #c8d9ef;
}
.scroll {
  position: absolute;
  right: 5px;
  top: 13px;
  width: 8px;
  height: 177px;
  border-radius: 4px;
  background: #c6c6c6;
}

.layer-tools {
  height: 30px;
  flex: none;
  display: flex;
  align-items: center;
  gap: 14px;
  padding-left: 4px;
  background: #eee;
  border-bottom: 1px solid #c5c7cb;
  box-sizing: border-box;
  color: #333;
}
.layer-head,
.layer-row {
  display: flex;
  flex: none;
}
.layer-head {
  height: 21px;
  background: #eee;
}
.layer-head > div {
  border-bottom: 1px solid #c5c7cb;
  border-right: 1px solid #c5c7cb;
  box-sizing: border-box;
  line-height: 21px;
  text-align: center;
  color: #444;
}
.c1 {
  width: 51px;
}
.c2 {
  width: 36px;
}
.c3 {
  width: 151px;
}
.layer-row {
  height: 21px;
}
.layer-row > div {
  display: flex;
  align-items: center;
  justify-content: center;
  border-bottom: 1px solid #c5c7cb;
  border-right: 1px solid #c5c7cb;
  box-sizing: border-box;
}
.layer-row > .name {
  justify-content: flex-start;
  padding: 1px 0 0 4px;
  color: #222;
}

.split {
  width: 4px;
  flex: none;
  padding-top: 372px;
  box-sizing: border-box;
}
.split-bar {
  height: 100px;
  background: #6f767e;
  display: flex;
  align-items: center;
}
.split-bar i {
  border: 3px solid transparent;
  border-left: 0;
  border-right: 3px solid #c0c3c6;
}
.canvas {
  width: 858px;
  height: 579px;
  flex: none;
  margin-top: 1px;
  background: #000;
  display: block;
}
.cad {
  font-family: Roboto, "Liberation Sans", sans-serif;
  font-weight: 300;
}
.bubble-text {
  font-weight: 500;
}
</style>

<style>
html,
body {
  margin: 0;
  overflow: hidden;
}
</style>
